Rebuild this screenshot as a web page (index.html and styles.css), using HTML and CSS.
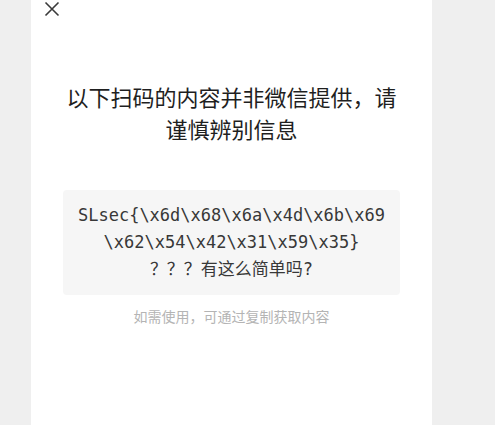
FILE: index.html
```html
<!DOCTYPE html>
<html lang="zh-CN">
<head>
<meta charset="utf-8">
<link rel="stylesheet" href="styles.css">
</head>
<body>
<div class="page">
  <div class="card">
    <div class="topbar">
      <svg class="close" width="16" height="16" viewBox="0 0 16 16"><path d="M1.5 1.5 L14.5 14.5 M14.5 1.5 L1.5 14.5" stroke="#3a3a3a" stroke-width="1.6" fill="none"/></svg>
    </div>
    <h1 class="title">以下扫码的内容并非微信提供，请谨慎辨别信息</h1>
    <div class="content">SLsec{\x6d\x68\x6a\x4d\x6b\x69\x62\x54\x42\x31\x59\x35}<br>？？？有这么简单吗?</div>
    <p class="hint">如需使用，可通过复制获取内容</p>
  </div>
</div>
</body>
</html>
```
FILE: styles.css
```css
html, body {
  margin: 0;
  padding: 0;
  height: 100%;
}
body {
  background: #efefef;
  font-family: "Noto Sans CJK SC", "Noto Sans", sans-serif;
}
.page {
  padding-left: 31px;
  height: 100%;
}
.card {
  width: 401px;
  height: 100%;
  background: #fff;
  box-sizing: border-box;
  padding: 0 32px;
}
.topbar {
  height: 80px;
  margin-left: -19px;
  padding-top: 1px;
  box-sizing: border-box;
}
.close {
  display: block;
}
.title {
  margin: 0;
  font-size: 22px;
  line-height: 32px;
  font-weight: normal;
  color: #1f1f1f;
  text-align: center;
}
.content {
  margin-top: 46px;
  background: #f6f6f6;
  border-radius: 4px;
  padding: 12px 10px;
  font-family: "DejaVu Sans Mono", "Noto Sans CJK SC", monospace;
  font-size: 17px;
  line-height: 27px;
  color: #383838;
  text-align: center;
  word-break: break-all;
}
.hint {
  margin: 11px 0 0;
  font-size: 14px;
  line-height: 20px;
  color: #b4b4b4;
  text-align: center;
}
```
